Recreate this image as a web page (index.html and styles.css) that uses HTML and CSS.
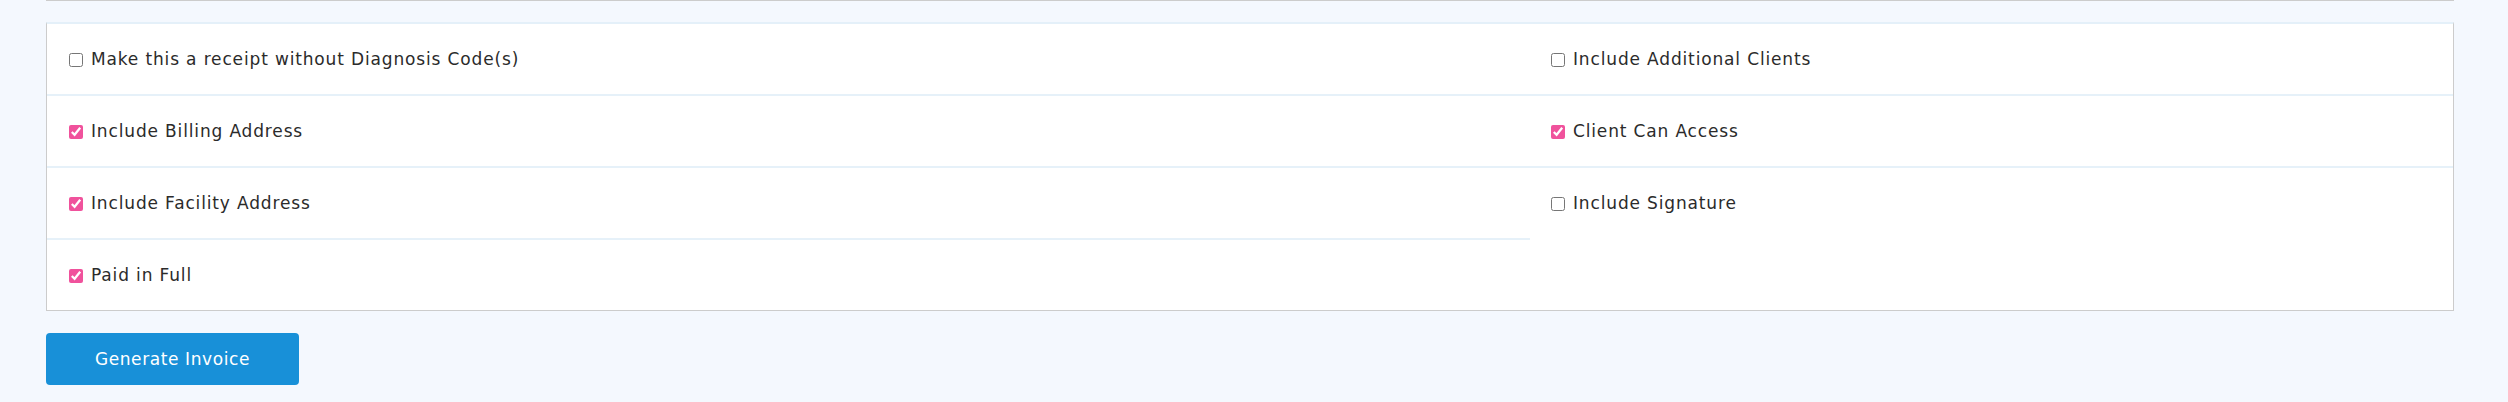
FILE: index.html
```html
<!DOCTYPE html>
<html lang="en">
<head>
<meta charset="utf-8">
<title>Invoice options</title>
<link rel="stylesheet" href="styles.css">
</head>
<body>
<div class="page">
  <div class="topline"></div>
  <div class="card">
    <ul class="col col-left">
      <li class="opt"><label><input type="checkbox"><span>Make this a receipt without Diagnosis Code(s)</span></label></li>
      <li class="opt"><label><input type="checkbox" checked><span>Include Billing Address</span></label></li>
      <li class="opt"><label><input type="checkbox" checked><span>Include Facility Address</span></label></li>
      <li class="opt"><label><input type="checkbox" checked><span>Paid in Full</span></label></li>
    </ul>
    <ul class="col col-right">
      <li class="opt"><label><input type="checkbox"><span>Include Additional Clients</span></label></li>
      <li class="opt"><label><input type="checkbox" checked><span>Client Can Access</span></label></li>
      <li class="opt"><label><input type="checkbox"><span>Include Signature</span></label></li>
    </ul>
  </div>
  <button class="btn" type="button">Generate Invoice</button>
</div>
</body>
</html>
```

FILE: styles.css
```css
html, body {
  margin: 0;
  padding: 0;
}
body {
  background: #f4f8fe;
  font-family: "DejaVu Sans", "Open Sans", sans-serif;
  color: #2b2b2b;
  height: 402px;
}
.page {
  padding: 0 54px 0 46px;
}
.topline {
  border-top: 1px solid #cccccc;
}
.card {
  margin-top: 21px;
  background: #ffffff;
  border: 1px solid #cccccc;
  border-top: 2px solid #e4f0f9;
  display: flex;
}
.col {
  list-style: none;
  margin: 0;
  padding: 0;
}
.col-left {
  width: 1483px;
}
.col-right {
  flex: 1;
}
.opt {
  height: 70px;
  border-bottom: 2px solid #e6f1f9;
  display: flex;
  align-items: center;
  padding-left: 22px;
}
.col-right .opt {
  padding-left: 21px;
}
.opt:last-child {
  border-bottom: none;
}
.opt label {
  display: flex;
  align-items: center;
  font-size: 17px;
  letter-spacing: 0.85px;
}
.opt input {
  width: 14px;
  height: 14px;
  margin: 1px 8px 0 0;
  accent-color: #f0529c;
}
.btn {
  margin-top: 22px;
  width: 253px;
  height: 52px;
  background: #1890d8;
  color: #ffffff;
  border: none;
  border-radius: 4px;
  font-family: "DejaVu Sans", "Open Sans", sans-serif;
  font-size: 17px;
  letter-spacing: 0.6px;
  padding: 0;
}
```
